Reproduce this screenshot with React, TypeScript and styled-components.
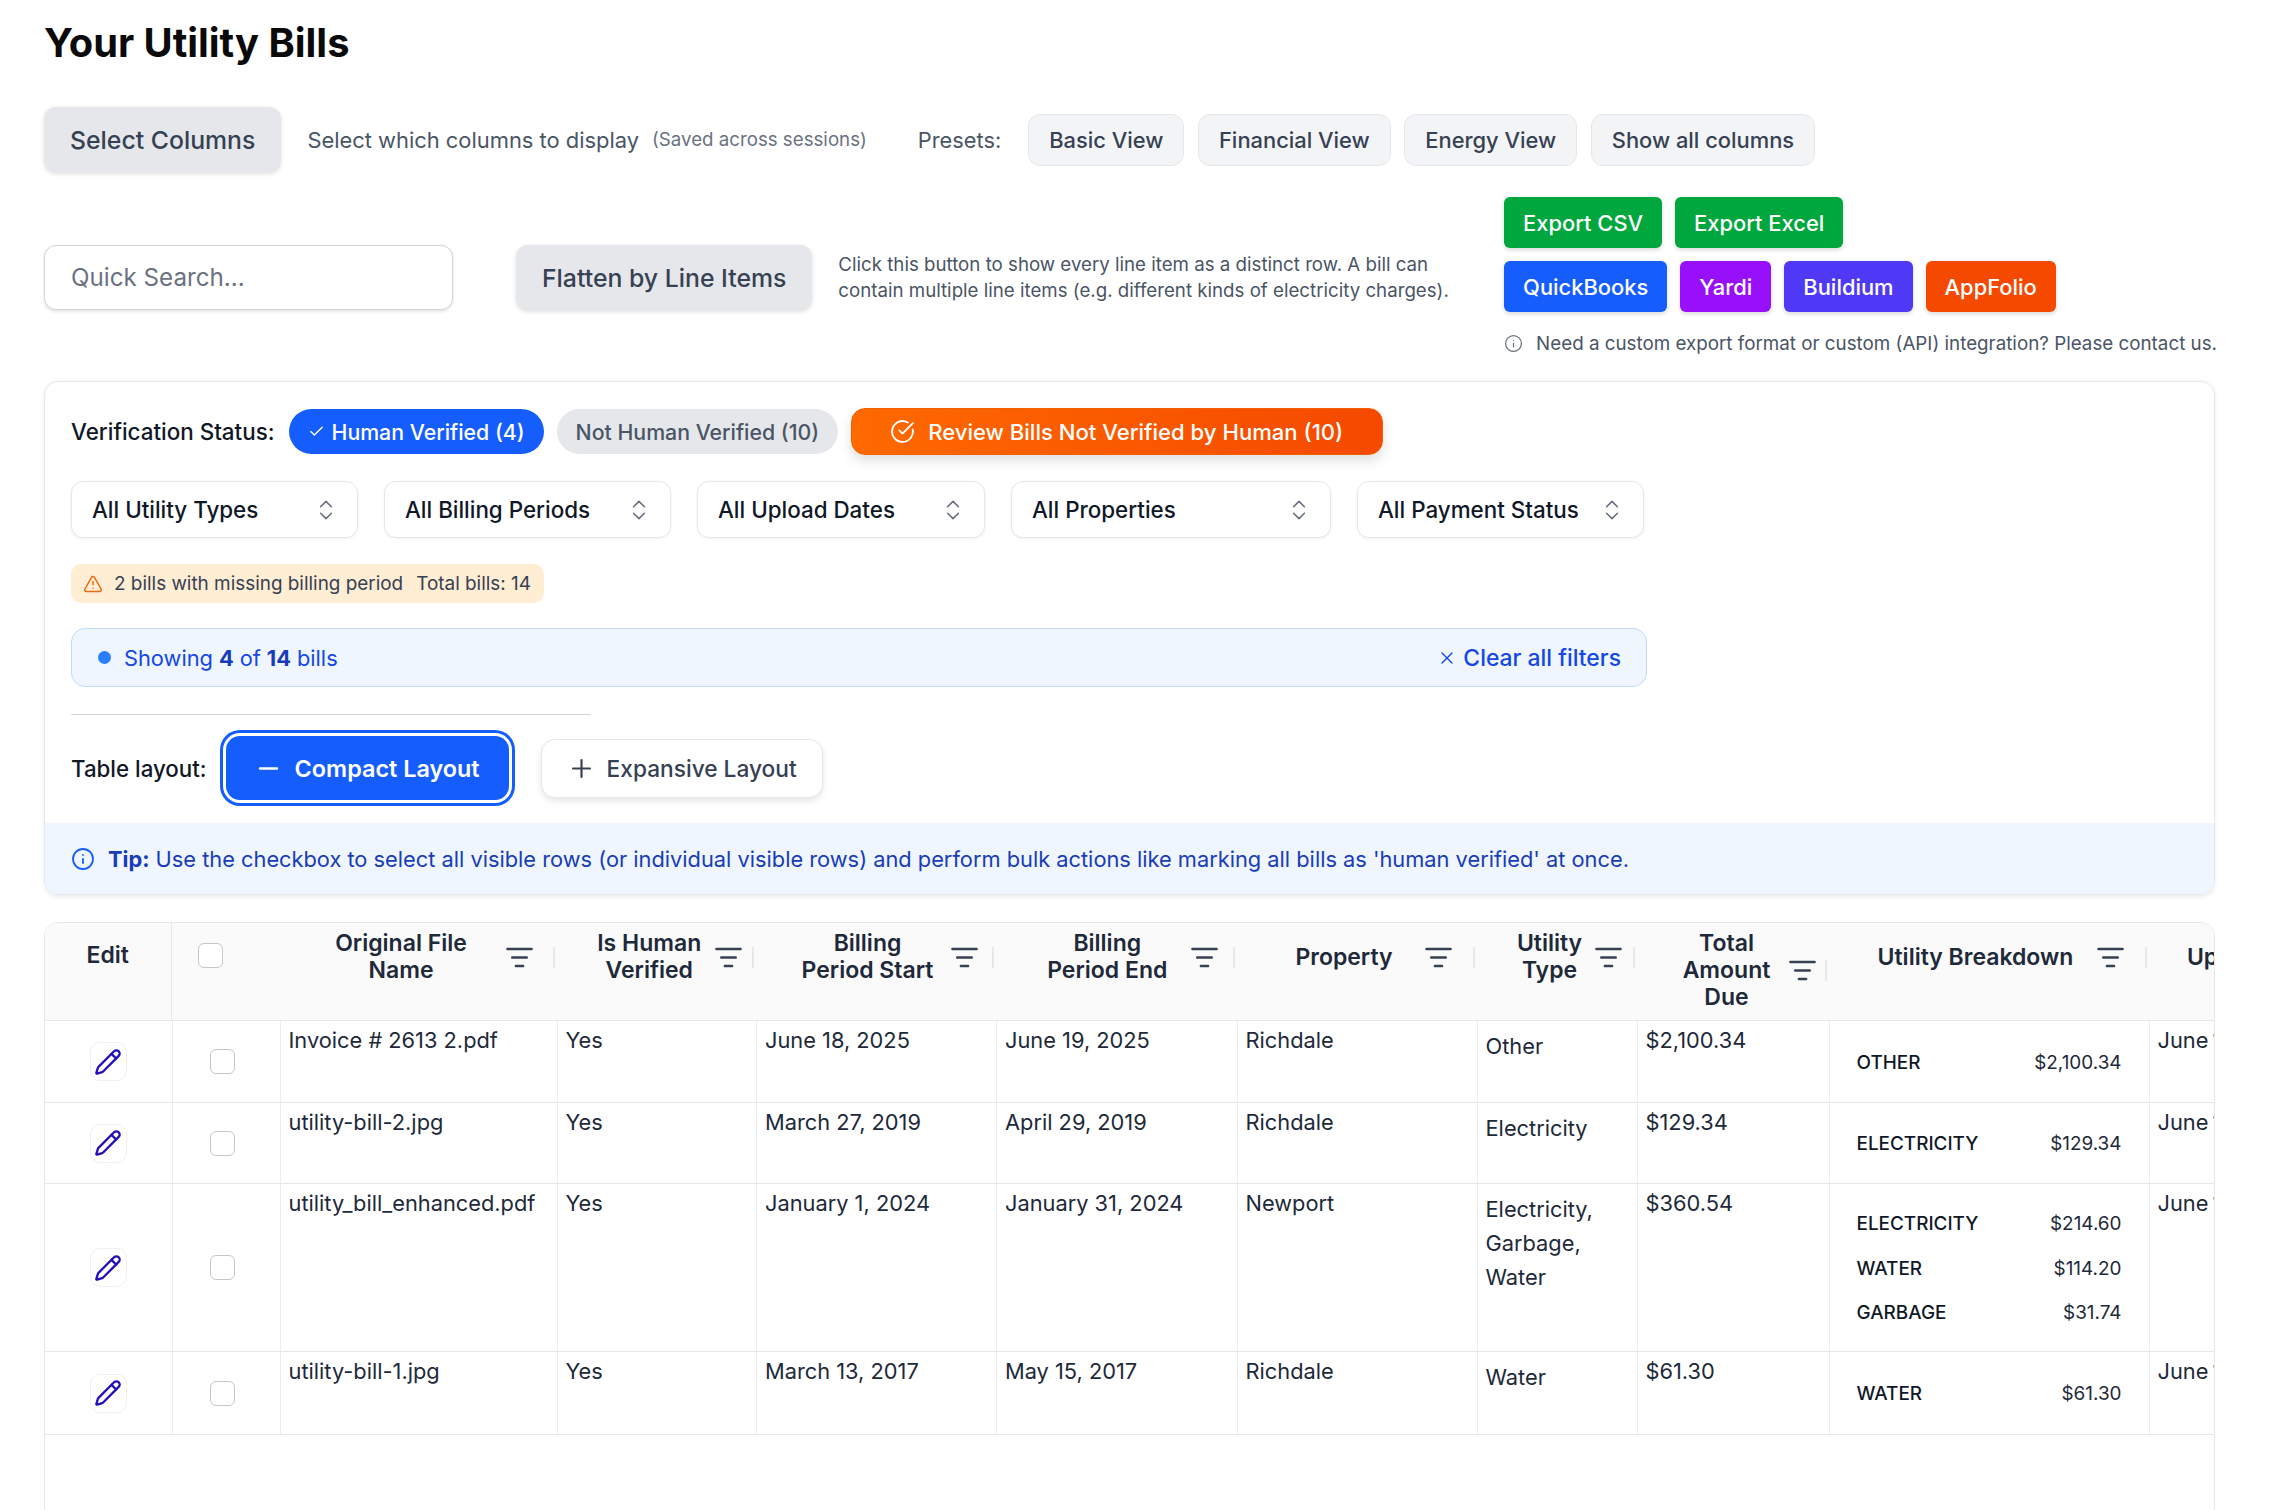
import styled, { createGlobalStyle } from "styled-components";
import { Check, ChevronsUpDown, CircleCheckBig, Info, ListFilter, Minus, Pencil, Plus, TriangleAlert, X } from "lucide-react";

const GlobalStyle = createGlobalStyle`
  html, body {
    margin: 0;
    padding: 0;
    background: #fff;
    font-family: "Inter", "Liberation Sans", sans-serif;
    overflow: hidden;
  }
  * { box-sizing: border-box; }
`;

const Page = styled.div`
  width: 2278px;
  height: 1510px;
  padding: 20px 63px 0 44px;
  overflow: hidden;
`;

const Title = styled.h1`
  margin: 0;
  font-size: 39.8px;
  line-height: 46px;
  font-weight: 700;
  color: #0a0a0a;
`;

const ColumnsRow = styled.div`
  display: flex;
  align-items: center;
  margin-top: 41px;
  height: 65px;
`;

const GrayButton = styled.button`
  height: 65px;
  padding: 0 26px;
  border: 0;
  border-radius: 12px;
  background: #e5e7eb;
  color: #364153;
  font: 500 24.8px "Inter", sans-serif;
  box-shadow: 0 1.5px 4px rgba(0, 0, 0, 0.12);
`;

const Hint = styled.span`
  margin-left: 26px;
  color: #4a5565;
  font-size: 21.9px;
`;

const SavedNote = styled.span`
  margin-left: 13px;
  color: #6a7282;
  font-size: 18.7px;
`;

const PresetLabel = styled.span`
  margin-left: 51px;
  margin-right: 27px;
  color: #4a5565;
  font-size: 21.8px;
`;

const Presets = styled.div`
  display: flex;
  gap: 13.5px;
`;

const PresetButton = styled.button`
  height: 52px;
  padding: 0 20px;
  border: 1.5px solid #e5e7eb;
  border-radius: 12px;
  background: #f3f4f6;
  color: #364153;
  font: 500 21.9px "Inter", sans-serif;
`;

const ToolsRow = styled.div`
  display: flex;
  align-items: center;
  margin-top: 25px;
`;

const SearchBox = styled.input`
  width: 409px;
  height: 65px;
  padding: 0 26px;
  border: 1.5px solid #d1d5dc;
  border-radius: 12px;
  background: #fff;
  font: 400 24.2px "Inter", sans-serif;
  box-shadow: 0 1.5px 3px rgba(0, 0, 0, 0.1);
  &::placeholder { color: #6a7282; }
`;

const FlattenButton = styled(GrayButton)`
  margin-left: 63px;
`;

const FlattenHelp = styled.p`
  margin: 0 0 0 26px;
  width: 620px;
  color: #4a5565;
  font-size: 18.7px;
  line-height: 26px;
`;

const ExportColumn = styled.div`
  margin-left: auto;
  display: flex;
  flex-direction: column;
  gap: 13px;
`;

const ExportRow = styled.div`
  display: flex;
  gap: 13px;
`;

const ExportButton = styled.button<{ $bg: string }>`
  height: 51px;
  padding: 0 19px;
  border: 0;
  border-radius: 6px;
  background: ${(p) => p.$bg};
  color: #fff;
  font: 500 21.9px "Inter", sans-serif;
  box-shadow: 0 1.5px 4px rgba(0, 0, 0, 0.15);
`;

const ExportNote = styled.div`
  display: flex;
  align-items: center;
  gap: 13px;
  margin-top: 3px;
  height: 30px;
  margin-right: -2px;
  color: #4a5565;
  font-size: 18.8px;
  white-space: nowrap;
  svg { color: #6a7282; }
`;

const FilterPanel = styled.section`
  margin-top: 23px;
  padding-top: 26px;
  border: 1.5px solid #e5e7eb;
  border-radius: 14px;
  overflow: hidden;
  box-shadow: 0 1.5px 4px rgba(0, 0, 0, 0.08);
`;

const PanelBody = styled.div`
  padding: 0 26px;
`;

const StatusRow = styled.div`
  display: flex;
  align-items: center;
  height: 47px;
`;

const StatusLabel = styled.span`
  margin-right: 14px;
  color: #101828;
  font-size: 22.4px;
  font-weight: 500;
`;

const Pill = styled.button<{ $on?: boolean }>`
  display: inline-flex;
  align-items: center;
  gap: 7px;
  height: 45px;
  margin-right: 13px;
  padding: 0 19px;
  border: 0;
  border-radius: 23px;
  background: ${(p) => (p.$on ? "#155dfc" : "#e5e7eb")};
  color: ${(p) => (p.$on ? "#fff" : "#4a5565")};
  font: 500 21.3px "Inter", sans-serif;
`;

const ReviewButton = styled.button`
  display: inline-flex;
  align-items: center;
  gap: 13px;
  height: 47px;
  padding: 0 39px 0 38px;
  border: 1.5px solid #f06000;
  border-radius: 14px;
  background: linear-gradient(to right, #ff6900, #f54900);
  color: #fff;
  font: 500 22.1px "Inter", sans-serif;
  box-shadow: 0 6px 12px rgba(0, 0, 0, 0.12);
`;

const SelectRow = styled.div`
  display: flex;
  gap: 26px;
  margin-top: 26px;
`;

const FakeSelect = styled.div<{ $w: number }>`
  display: flex;
  align-items: center;
  justify-content: space-between;
  width: ${(p) => p.$w}px;
  height: 57px;
  padding: 0 18px 0 20px;
  border: 1.5px solid #e5e7eb;
  border-radius: 12px;
  background: #fff;
  color: #101828;
  font-size: 22.4px;
  font-weight: 500;
  box-shadow: 0 1px 3px rgba(0, 0, 0, 0.06);
  svg { color: #6a7282; }
`;

const WarnBadge = styled.div`
  display: inline-flex;
  align-items: center;
  height: 39px;
  margin-top: 26px;
  padding: 0 13px 0 12px;
  border-radius: 10px;
  background: #ffedd4;
  color: #364153;
  font-size: 18.9px;
  svg { color: #ea6a10; margin-right: 11px; }
`;

const WarnTotal = styled.span`
  margin-left: 13px;
`;

const ShowingBox = styled.div`
  display: flex;
  align-items: center;
  justify-content: space-between;
  width: 1576px;
  height: 59px;
  margin-top: 25px;
  padding: 0 25px 0 26px;
  border: 1.5px solid #bedbff;
  border-radius: 14px;
  background: #eff6ff;
  color: #1447e6;
  font-size: 21.8px;
`;

const ShowingText = styled.span`
  display: flex;
  align-items: center;
  b { font-weight: 700; color: #193cb8; margin: 0 6px; }
`;

const Dot = styled.i`
  width: 13px;
  height: 13px;
  margin-right: 13px;
  border-radius: 50%;
  background: #2b7fff;
`;

const ClearLink = styled.span`
  display: flex;
  align-items: center;
  gap: 6px;
  font-size: 22.9px;
  font-weight: 500;
`;

const Divider = styled.hr`
  width: 520px;
  margin: 27px 0 21px;
  border: 0;
  border-top: 1.5px solid #d1d5dc;
`;

const LayoutRow = styled.div`
  display: flex;
  align-items: center;
  height: 64px;
`;

const LayoutLabel = styled.span`
  margin-right: 19px;
  color: #101828;
  font-size: 22.3px;
  font-weight: 500;
`;

const LayoutButton = styled.button<{ $on?: boolean }>`
  display: inline-flex;
  align-items: center;
  gap: ${(p) => (p.$on ? 12 : 11)}px;
  height: ${(p) => (p.$on ? 64 : 59)}px;
  padding: ${(p) => (p.$on ? "0 29px 0 28px" : "0 25px")};
  margin-right: 32px;
  border: ${(p) => (p.$on ? "0" : "1.5px solid #e5e7eb")};
  border-radius: 14px;
  background: ${(p) => (p.$on ? "#155dfc" : "#fff")};
  color: ${(p) => (p.$on ? "#fff" : "#364153")};
  font: ${(p) => (p.$on ? "600 23.4px" : "500 22.7px")} "Inter", sans-serif;
  box-shadow: ${(p) => (p.$on ? "0 0 0 3px #fff, 0 0 0 6px #155dfc" : "0 3px 6px rgba(0,0,0,0.1)")};
`;

const TipBar = styled.div`
  display: flex;
  align-items: center;
  gap: 13px;
  height: 71px;
  margin-top: 23px;
  padding: 0 26px;
  background: #eff6ff;
  color: #193cb8;
  font-size: 21.8px;
  svg { color: #155dfc; }
  b { font-weight: 700; }
`;

const TableCard = styled.div`
  margin-top: 27px;
  height: 620px;
  border: 1.5px solid #e5e7eb;
  border-radius: 14px 14px 0 0;
  overflow: hidden;
`;

const gridColumns = "126.5px 108px 277px 199.5px 240px 240.5px 240px 160px 192px 320px 240px";

const HeadRow = styled.div`
  display: grid;
  grid-template-columns: ${gridColumns};
  height: 98px;
  background: #fafafa;
  border-bottom: 1.5px solid #e5e7eb;
  color: #1e2939;
  font-size: 23px;
  font-weight: 600;
  line-height: 27px;
`;

const EditHead = styled.div`
  padding-top: 19px;
  border-right: 1.5px solid #e5e7eb;
  text-align: center;
`;

const CheckHead = styled.div`
  padding: 20px 0 0 26px;
`;

const Box = styled.span`
  display: block;
  width: 25px;
  height: 25px;
  border: 1.5px solid #c4c7cc;
  border-radius: 6px;
  background: #fff;
`;

const HeadCell = styled.div<{ $pad: number }>`
  display: flex;
  align-items: center;
  align-self: start;
  min-height: 54px;
  margin-top: 7px;
  padding: 0 2px 0 ${(p) => p.$pad}px;
`;

const HeadLabel = styled.div`
  flex: 1;
  text-align: center;
  white-space: nowrap;
`;

const FilterIcon = styled(ListFilter)<{ $gap: number }>`
  flex: none;
  margin-right: ${(p) => p.$gap}px;
  color: #364153;
`;

const HeadSep = styled.i`
  flex: none;
  width: 2px;
  height: 21px;
  background: #e5e7eb;
`;

const BodyRow = styled.div<{ $h: number }>`
  display: grid;
  grid-template-columns: ${gridColumns};
  height: ${(p) => p.$h}px;
  border-bottom: 1.5px solid #e5e7eb;
  color: #1e2939;
  font-size: 21.8px;
`;

const Cell = styled.div`
  padding: 8px;
  line-height: 23px;
  border-left: 1px solid #ececec;
  white-space: nowrap;
`;

const EditCell = styled.div`
  display: flex;
  align-items: center;
  justify-content: center;
`;

const EditButton = styled.button`
  display: flex;
  align-items: center;
  justify-content: center;
  width: 37px;
  height: 39px;
  padding: 0;
  border: 1px solid #f0f0f0;
  border-radius: 10px;
  background: #fff;
  color: #2410bb;
`;

const CheckCell = styled(Cell)`
  display: flex;
  align-items: center;
  justify-content: center;
  padding: 0 8px 0 0;
`;

const TypeCell = styled(Cell)`
  line-height: 34px;
`;

const BreakdownCell = styled(Cell)`
  display: flex;
  flex-direction: column;
  justify-content: center;
  padding: 3px 27px 0;
`;

const BreakdownLine = styled.div`
  display: flex;
  justify-content: space-between;
  line-height: 44.5px;
  font-size: 18.9px;
  span:first-child { font-weight: 500; color: #101828; }
`;

const UploadCell = styled(Cell)`
  word-spacing: -2px;
`;

const columns = [
  { label: ["Original File", "Name"], pad: 18, gap: 19 },
  { label: ["Is Human", "Verified"], pad: 28, gap: 9 },
  { label: ["Billing", "Period Start"], pad: 29, gap: 13 },
  { label: ["Billing", "Period End"], pad: 29, gap: 14 },
  { label: ["Property"], pad: 28, gap: 20 },
  { label: ["Utility", "Type"], pad: 29, gap: 10 },
  { label: ["Total", "Amount", "Due"], pad: 29, gap: 8 },
  { label: ["Utility Breakdown"], pad: 27, gap: 20 },
  { label: ["Upload Date"], pad: 26, gap: 20 },
];

const bills = [
  {
    file: "Invoice # 2613 2.pdf", start: "June 18, 2025", end: "June 19, 2025", property: "Richdale",
    types: ["Other"], total: "$2,100.34", h: 82,
    breakdown: [["OTHER", "$2,100.34"]],
  },
  {
    file: "utility-bill-2.jpg", start: "March 27, 2019", end: "April 29, 2019", property: "Richdale",
    types: ["Electricity"], total: "$129.34", h: 81,
    breakdown: [["ELECTRICITY", "$129.34"]],
  },
  {
    file: "utility_bill_enhanced.pdf", start: "January 1, 2024", end: "January 31, 2024", property: "Newport",
    types: ["Electricity,", "Garbage,", "Water"], total: "$360.54", h: 168,
    breakdown: [["ELECTRICITY", "$214.60"], ["WATER", "$114.20"], ["GARBAGE", "$31.74"]],
  },
  {
    file: "utility-bill-1.jpg", start: "March 13, 2017", end: "May 15, 2017", property: "Richdale",
    types: ["Water"], total: "$61.30", h: 83,
    breakdown: [["WATER", "$61.30"]],
  },
];

const filters = [
  { label: "All Utility Types", w: 287 },
  { label: "All Billing Periods", w: 287 },
  { label: "All Upload Dates", w: 288 },
  { label: "All Properties", w: 320 },
  { label: "All Payment Status", w: 287 },
];

function App() {
  return (
    <Page>
      <GlobalStyle />
      <Title>Your Utility Bills</Title>

      <ColumnsRow>
        <GrayButton>Select Columns</GrayButton>
        <Hint>Select which columns to display</Hint>
        <SavedNote>(Saved across sessions)</SavedNote>
        <PresetLabel>Presets:</PresetLabel>
        <Presets>
          {["Basic View", "Financial View", "Energy View", "Show all columns"].map((p) => (
            <PresetButton key={p}>{p}</PresetButton>
          ))}
        </Presets>
      </ColumnsRow>

      <ToolsRow>
        <SearchBox placeholder="Quick Search..." />
        <FlattenButton>Flatten by Line Items</FlattenButton>
        <FlattenHelp>
          Click this button to show every line item as a distinct row. A bill can contain multiple line items (e.g.
          different kinds of electricity charges).
        </FlattenHelp>
        <ExportColumn>
          <ExportRow>
            <ExportButton $bg="#00a63e">Export CSV</ExportButton>
            <ExportButton $bg="#00a63e">Export Excel</ExportButton>
          </ExportRow>
          <ExportRow>
            <ExportButton $bg="#155dfc">QuickBooks</ExportButton>
            <ExportButton $bg="#9810fa">Yardi</ExportButton>
            <ExportButton $bg="#4f39f6">Buildium</ExportButton>
            <ExportButton $bg="#f54900">AppFolio</ExportButton>
          </ExportRow>
          <ExportNote>
            <Info size={19} strokeWidth={1.6} />
            Need a custom export format or custom (API) integration? Please contact us.
          </ExportNote>
        </ExportColumn>
      </ToolsRow>

      <FilterPanel>
        <PanelBody>
          <StatusRow>
            <StatusLabel>Verification Status:</StatusLabel>
            <Pill $on>
              <Check size={17} strokeWidth={2} />
              Human Verified (4)
            </Pill>
            <Pill>Not Human Verified (10)</Pill>
            <ReviewButton>
              <CircleCheckBig size={25} strokeWidth={1.8} />
              Review Bills Not Verified by Human (10)
            </ReviewButton>
          </StatusRow>

          <SelectRow>
            {filters.map((f) => (
              <FakeSelect key={f.label} $w={f.w}>
                {f.label}
                <ChevronsUpDown size={26} strokeWidth={1.5} />
              </FakeSelect>
            ))}
          </SelectRow>

          <WarnBadge>
            <TriangleAlert size={20} strokeWidth={1.8} />
            2 bills with missing billing period
            <WarnTotal>Total bills: 14</WarnTotal>
          </WarnBadge>

          <ShowingBox>
            <ShowingText>
              <Dot />
              Showing <b>4</b> of <b>14</b> bills
            </ShowingText>
            <ClearLink>
              <X size={20} strokeWidth={1.6} />
              Clear all filters
            </ClearLink>
          </ShowingBox>

          <Divider />

          <LayoutRow>
            <LayoutLabel>Table layout:</LayoutLabel>
            <LayoutButton $on>
              <Minus size={29} strokeWidth={2} />
              Compact Layout
            </LayoutButton>
            <LayoutButton>
              <Plus size={29} strokeWidth={1.8} />
              Expansive Layout
            </LayoutButton>
          </LayoutRow>
        </PanelBody>

        <TipBar>
          <Info size={24} strokeWidth={1.8} />
          <span>
            <b>Tip:</b> Use the checkbox to select all visible rows (or individual visible rows) and perform bulk
            actions like marking all bills as 'human verified' at once.
          </span>
        </TipBar>
      </FilterPanel>

      <TableCard>
        <HeadRow>
          <EditHead>Edit</EditHead>
          <CheckHead>
            <Box />
          </CheckHead>
          {columns.map((c) => (
            <HeadCell key={c.label.join(" ")} $pad={c.pad}>
              <HeadLabel>
                {c.label.map((l) => (
                  <div key={l}>{l}</div>
                ))}
              </HeadLabel>
              <FilterIcon size={29} strokeWidth={2} $gap={c.gap} />
              <HeadSep />
            </HeadCell>
          ))}
        </HeadRow>

        {bills.map((b) => (
          <BodyRow key={b.file} $h={b.h}>
            <EditCell>
              <EditButton>
                <Pencil size={28} strokeWidth={2} />
              </EditButton>
            </EditCell>
            <CheckCell>
              <Box />
            </CheckCell>
            <Cell>{b.file}</Cell>
            <Cell>Yes</Cell>
            <Cell>{b.start}</Cell>
            <Cell>{b.end}</Cell>
            <Cell>{b.property}</Cell>
            <TypeCell>
              {b.types.map((t) => (
                <div key={t}>{t}</div>
              ))}
            </TypeCell>
            <Cell>{b.total}</Cell>
            <BreakdownCell>
              {b.breakdown.map(([name, amount]) => (
                <BreakdownLine key={name}>
                  <span>{name}</span>
                  <span>{amount}</span>
                </BreakdownLine>
              ))}
            </BreakdownCell>
            <UploadCell>June 19, 2025</UploadCell>
          </BodyRow>
        ))}
      </TableCard>
    </Page>
  );
}

export default App;
